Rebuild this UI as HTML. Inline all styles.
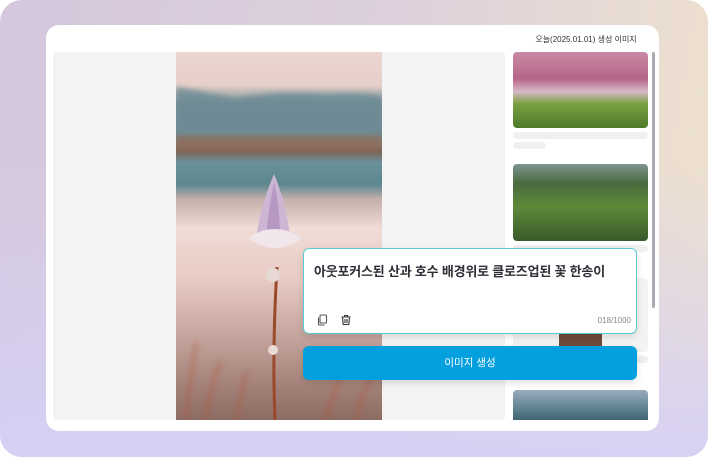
<!DOCTYPE html>
<html><head><meta charset="utf-8"><style>
*{margin:0;padding:0;box-sizing:border-box}
body{width:708px;height:457px;overflow:hidden;font-family:"Liberation Sans","Noto Sans CJK KR",sans-serif;background:#fff}
.outer{position:absolute;left:0;top:0;width:708px;height:457px;border-radius:22px;background:linear-gradient(100deg,#d5c7dc 0%,#ddd0dc 50%,#f0e3cc 100%);overflow:hidden}
.outer:after{content:"";position:absolute;inset:0;background:linear-gradient(180deg,rgba(220,215,245,0) 35%,rgba(214,208,246,.95) 100%)}
.card{position:absolute;left:46px;top:25px;width:613px;height:406px;background:#fff;border-radius:13px;z-index:2}
.main{position:absolute;left:7px;top:27px;width:452px;height:368px;background:#f3f3f3;border-radius:3px}
.img{position:absolute;left:130px;top:27px;width:206px;height:368px;overflow:hidden;background:linear-gradient(180deg,#ecd6d0 0%,#e6cfc8 9%,#7a949a 14%,#6f8d96 22%,#8a7566 25%,#7c6458 27%,#6a9098 30%,#5c8890 36%,#c4b0ac 40%,#f1dcd6 48%,#e8cbc4 62%,#c7a8a0 76%,#a5837a 90%,#8c6c63 100%)}
.title{position:absolute;left:470px;top:9px;width:140px;text-align:center;font-size:8px;color:#333}
.thumb{position:absolute;left:467px;width:135px;border-radius:4px;overflow:hidden}
.bar{position:absolute;left:467px;height:7px;background:#f0f0f0;border-radius:4px}
.ta{position:absolute;left:257px;top:223px;width:334px;height:86px;border:1.3px solid #5fcad3;border-radius:6px;background:#fff;box-shadow:0 3px 8px rgba(0,0,0,.12);z-index:3}
.ta p{position:absolute;left:10px;top:12px;font-size:13px;font-weight:bold;color:#2e3038;letter-spacing:-0.2px}
.cnt{position:absolute;right:5px;bottom:8px;font-size:8px;color:#888}
.btn{position:absolute;left:257px;top:321px;width:334px;height:34px;background:#049fdf;border-radius:6px;color:#fff;font-size:10.5px;text-align:center;line-height:34px;z-index:3;box-shadow:0 3px 8px rgba(0,0,0,.12)}
</style></head><body>
<div class="outer"></div>
<div class="card">
<div class="title">오늘(2025.01.01) 생성 이미지</div>
<div class="main"></div>
<div class="img">
<svg width="206" height="368" style="position:absolute;left:0;top:0">
<defs><filter id="b"><feGaussianBlur stdDeviation="3"/></filter></defs>
<g filter="url(#b)">
<path d="M0 35 Q30 40 60 47 Q100 38 150 42 Q185 40 206 44 L206 80 L0 80Z" fill="#6a8a93" opacity=".8"/>
<rect x="0" y="83" width="206" height="16" fill="#8f6a58" opacity=".6"/>
<g stroke="#b5553c" stroke-width="3" opacity=".55" fill="none">
<path d="M10 368 Q15 320 20 290"/><path d="M30 368 Q35 330 45 310"/><path d="M150 368 Q160 330 175 300"/><path d="M180 368 Q185 340 200 320"/><path d="M60 368 L70 320"/>
</g></g>
<path d="M99 368 Q96 300 101 215" stroke="#9a4a2a" stroke-width="3" fill="none"/>
<path d="M98 122 Q86 150 80 185 Q97 205 114 185 Q110 150 98 122Z" fill="#cdb6d4"/>
<path d="M98 130 Q92 160 90 185 L104 185 Q104 155 98 130Z" fill="#a884b8" opacity=".6"/>
<path d="M72 186 Q98 168 126 186 Q100 206 72 186Z" fill="#f1e6ea"/>
<circle cx="97" cy="223" r="7" fill="#e6d8d4"/>
<circle cx="97" cy="298" r="5" fill="#eadad8"/>
</svg>
</div>
<div style="position:absolute;left:606px;top:27px;width:3px;height:256px;background:#a9abb3;border-radius:2px"></div>
<div class="thumb" style="top:27px;height:76px;background:linear-gradient(180deg,#c98aa5 0%,#b66588 35%,#d8b8c8 52%,#7aa040 68%,#4d7a2a 100%)"></div>
<div class="bar" style="top:107px;width:135px"></div>
<div class="bar" style="top:117px;width:33px"></div>
<div class="thumb" style="top:139px;height:77px;background:linear-gradient(180deg,#7d9490 0%,#4b6a3e 25%,#5d8a3a 55%,#3a5a2a 100%)"></div>
<div class="bar" style="top:220px;width:135px"></div>
<div class="thumb" style="top:253px;height:74px;background:#f3f3f3"></div>
<div style="position:absolute;left:513px;top:309px;width:43px;height:18px;background:#6d4a3a;z-index:1"></div>
<div class="bar" style="top:331px;width:135px"></div>
<div class="thumb" style="top:365px;height:30px;border-radius:4px 4px 0 0;background:linear-gradient(180deg,#9aacbc 0%,#6a8a9a 50%,#3f6470 100%)"></div>
<div class="ta"><p>아웃포커스된 산과 호수 배경위로 클로즈업된 꽃 한송이</p>
<svg style="position:absolute;left:12px;top:65px" width="12" height="12" viewBox="0 0 12 12" fill="none" stroke="#555" stroke-width="1.1"><rect x="4" y="1" width="6.5" height="8" rx="1"/><path d="M2.5 3.5v6.5a1 1 0 0 0 1 1h5"/></svg>
<svg style="position:absolute;left:36px;top:65px" width="12" height="12" viewBox="0 0 12 12" fill="none" stroke="#333" stroke-width="1.1"><path d="M1.5 3h9M4.5 3V1.5h3V3M2.5 3l.7 7.5h5.6L9.5 3M5 5v4M7 5v4"/></svg>
<div class="cnt">018/1000</div></div>
<div class="btn">이미지 생성</div>
</div>
</body></html>
